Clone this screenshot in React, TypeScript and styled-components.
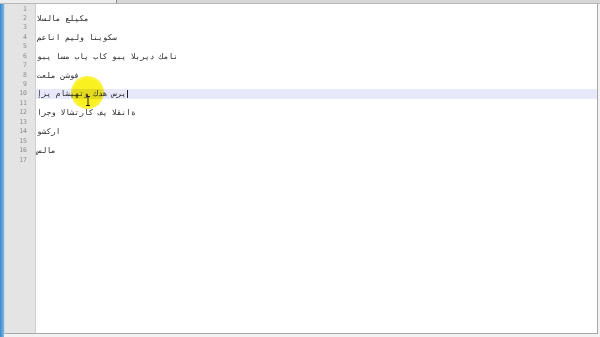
import React from "react";
import styled, { createGlobalStyle } from "styled-components";

const GlobalStyle = createGlobalStyle`
  html, body {
    margin: 0;
    padding: 0;
    width: 600px;
    height: 337px;
    overflow: hidden;
    background: #f0f0f0;
  }
`;

const LINE_H = 9.45;

const lines: string[] = [
  "",
  "السلام عليكم",
  "",
  "معانا ميلو انبوكس",
  "",
  "وبي اسم باي باك وبي البريد كمان",
  "",
  "تعلم نشوف",
  "",
  "إزي ماشيهتو كده سري",
  "",
  "ارجو الاشتراك في القناة",
  "",
  "وشكرا",
  "",
  "سلام",
  "",
];

const Window = styled.div`
  width: 600px;
  height: 337px;
  display: flex;
  flex-direction: column;
  background: #f2f2f2;
`;

const TabStrip = styled.div`
  height: 3px;
  display: flex;
  background: #d6d6d6;
  border-bottom: 1px solid #b8b8b8;
`;

const Tab = styled.div`
  width: 116px;
  background: #ececec;
  border-right: 1px solid #8a8a8a;
`;

const Body = styled.div`
  flex: 1;
  display: flex;
  min-height: 0;
`;

const SideBar = styled.div`
  width: 4px;
  background: linear-gradient(90deg, #3d86c8, #7cb8e6);
`;

const Frame = styled.div`
  flex: 1;
  display: flex;
  border-left: 1px solid #c8d8e8;
  border-right: 1px solid #a8a8a8;
  border-bottom: 1px solid #a8a8a8;
  margin-right: 2px;
  margin-bottom: 3px;
  background: #ffffff;
  position: relative;
  overflow: hidden;
`;

const Gutter = styled.div`
  width: 30px;
  background: #e4e4e4;
  border-right: 1px solid #d0d0d0;
  padding-top: 0.5px;
  display: flex;
  flex-direction: column;
`;

const LineNo = styled.div`
  height: ${LINE_H}px;
  line-height: ${LINE_H}px;
  font-family: "DejaVu Sans Mono", "Liberation Mono", monospace;
  font-size: 6.5px;
  color: #8c8c8c;
  text-align: right;
  padding-right: 8px;
`;

const Editor = styled.div`
  flex: 1;
  display: flex;
  flex-direction: column;
  padding-top: 0.5px;
`;

const Line = styled.div<{ $current?: boolean }>`
  height: ${LINE_H}px;
  line-height: ${LINE_H}px;
  padding-left: 1px;
  font-family: "DejaVu Sans Mono", "Liberation Mono", monospace;
  font-size: 7.8px;
  letter-spacing: 0.2px;
  color: #2a2a2a;
  white-space: pre;
  direction: ltr;
  unicode-bidi: bidi-override;
  background: ${(p) => (p.$current ? "#e8e8fb" : "transparent")};
`;

const Caret = styled.span`
  display: inline-block;
  width: 1px;
  height: 8px;
  background: #222;
  vertical-align: middle;
  margin-left: 1px;
`;

const Spot = styled.div`
  position: absolute;
  left: 66px;
  top: 72px;
  width: 33px;
  height: 33px;
  border-radius: 50%;
  background: radial-gradient(circle, rgba(250, 240, 20, 0.95) 55%, rgba(250, 240, 40, 0.7) 80%, rgba(250, 240, 60, 0) 100%);
  mix-blend-mode: multiply;
  pointer-events: none;
`;

const IBeam = styled.svg`
  position: absolute;
  left: 80px;
  top: 92px;
`;

export default function App() {
  return (
    <>
      <GlobalStyle />
      <Window>
        <TabStrip>
          <Tab />
        </TabStrip>
        <Body>
          <SideBar />
          <Frame>
            <Gutter>
              {lines.map((_, i) => (
                <LineNo key={i}>{i + 1}</LineNo>
              ))}
            </Gutter>
            <Editor>
              {lines.map((t, i) => (
                <Line key={i} $current={i === 9}>
                  {t}
                  {i === 9 && <Caret />}
                </Line>
              ))}
            </Editor>
            <Spot />
            <IBeam width="6" height="10" viewBox="0 0 6 10">
              <path d="M1 0.5h4M3 0.5v9M1 9.5h4" stroke="#222" strokeWidth="1" fill="none" />
            </IBeam>
          </Frame>
        </Body>
      </Window>
    </>
  );
}
